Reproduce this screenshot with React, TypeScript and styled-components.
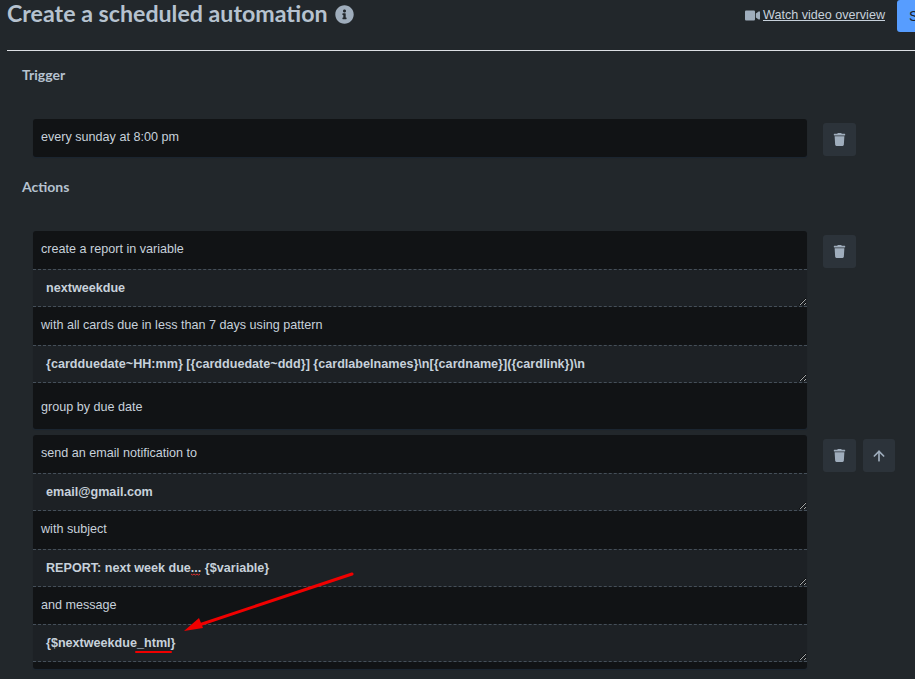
import React from "react";
import styled, { createGlobalStyle } from "styled-components";
import { FaInfoCircle, FaTrash, FaVideo } from "react-icons/fa";
import { ArrowUp } from "lucide-react";

const GlobalStyle = createGlobalStyle`
  html, body {
    margin: 0;
    padding: 0;
    height: 679px;
    overflow: hidden;
    background: #22272b;
  }
`;

const Page = styled.div`
  position: relative;
  width: 915px;
  height: 679px;
  overflow: hidden;
  padding-left: 7px;
  box-sizing: border-box;
  background: #22272b;
  color: #b6c2cf;
  font-family: "Liberation Sans", Arial, sans-serif;
  font-size: 14px;
`;

const Header = styled.header`
  display: flex;
  align-items: flex-start;
  width: 950px;
  height: 50px;
  border-bottom: 1px solid #dcdfe4;
`;

const Title = styled.h1`
  margin: -1px 0 0;
  font-family: Lato, sans-serif;
  font-size: 23.2px;
  font-weight: 700;
  line-height: 28px;
  color: #b6c2cf;
`;

const InfoIcon = styled(FaInfoCircle)`
  margin: 5px 0 0 7px;
  font-size: 19px;
  color: #9fadbc;
`;

const VideoLink = styled.a`
  display: flex;
  align-items: center;
  gap: 3px;
  margin: 7px 0 0 auto;
  color: #c7d1db;
  font-size: 12.6px;
  line-height: 16px;
  text-decoration: underline;
  svg {
    font-size: 15px;
    color: #9fadbc;
  }
`;

const SaveButton = styled.button`
  width: 60px;
  height: 32px;
  margin-left: 12px;
  padding: 0 12px;
  border: 0;
  border-radius: 3px;
  background: #579dff;
  color: #1d2125;
  font: 14px "Liberation Sans", Arial, sans-serif;
  text-align: left;
`;

const SectionTitle = styled.h2`
  margin: 0 0 0 15px;
  font-family: Lato, sans-serif;
  font-size: 14px;
  font-weight: 700;
  line-height: 20px;
  color: #b6c2cf;
`;

const Section = styled.section<{ $top: number; $gap: number }>`
  padding-top: ${(p) => p.$top}px;
  ${SectionTitle} {
    margin-bottom: ${(p) => p.$gap}px;
  }
`;

const RuleRow = styled.div`
  display: flex;
  align-items: flex-start;
  gap: 16px;
  margin: 0 0 6px 26px;
`;

const Card = styled.div`
  width: 774px;
  flex: none;
  border-radius: 3px;
  background: #111315;
  box-shadow: 0 1px 1px #091e4240;
  overflow: hidden;
`;

const Label = styled.div<{ $height: number }>`
  display: flex;
  align-items: center;
  box-sizing: border-box;
  height: ${(p) => p.$height}px;
  padding: 0 0 2px 8px;
  font-size: 12.6px;
  color: #c7d1db;
`;

const GroupLabel = styled(Label)`
  padding: 2px 0 0 8px;
`;

const Field = styled.textarea`
  display: block;
  box-sizing: border-box;
  width: 100%;
  height: 38px;
  margin: 0;
  padding: 9px 13px;
  border: 0;
  border-top: 1px dashed #454f59;
  border-bottom: 1px dashed #454f59;
  border-radius: 0;
  outline: 0;
  background: #1d2125;
  color: #c7d1db;
  font: bold 12.6px/18px "Liberation Sans", Arial, sans-serif;
  vertical-align: top;
`;

const Actions = styled.div`
  display: flex;
  gap: 7px;
  margin-top: 4px;
`;

const IconButton = styled.button<{ $width?: number }>`
  display: flex;
  align-items: center;
  justify-content: center;
  width: ${(p) => p.$width ?? 33}px;
  height: 33px;
  padding: 0;
  border: 0;
  border-radius: 3px;
  background: #2c333a;
  color: #9fadbc;
  font-size: 13px;
`;

const Annotation = styled.svg`
  position: absolute;
  inset: 0;
  pointer-events: none;
`;

const valueField = (value: string) => (
  <Field readOnly spellCheck={false} rows={1} defaultValue={value} />
);

export default function App() {
  return (
    <Page>
      <GlobalStyle />
      <Header>
        <Title>Create a scheduled automation</Title>
        <InfoIcon />
        <VideoLink href="#">
          <FaVideo />
          Watch video overview
        </VideoLink>
        <SaveButton>Save</SaveButton>
      </Header>

      <Section $top={14} $gap={34}>
        <SectionTitle>Trigger</SectionTitle>
        <RuleRow>
          <Card>
            <Label $height={38}>every sunday at 8:00 pm</Label>
          </Card>
          <Actions>
            <IconButton aria-label="Delete">
              <FaTrash />
            </IconButton>
          </Actions>
        </RuleRow>
      </Section>

      <Section $top={14} $gap={34}>
        <SectionTitle>Actions</SectionTitle>
        <RuleRow>
          <Card>
            <Label $height={38}>create a report in variable</Label>
            {valueField("nextweekdue")}
            <Label $height={38}>with all cards due in less than 7 days using pattern</Label>
            {valueField("{cardduedate~HH:mm} [{cardduedate~ddd}] {cardlabelnames}\\n[{cardname}]({cardlink})\\n")}
            <GroupLabel $height={46}>group by due date</GroupLabel>
          </Card>
          <Actions>
            <IconButton aria-label="Delete">
              <FaTrash />
            </IconButton>
          </Actions>
        </RuleRow>
        <RuleRow>
          <Card>
            <Label $height={38}>send an email notification to</Label>
            {valueField("email@gmail.com")}
            <Label $height={38}>with subject</Label>
            {valueField("REPORT: next week due... {$variable}")}
            <Label $height={37}>and message</Label>
            {valueField("{$nextweekdue_html}")}
            <Label $height={7} />
          </Card>
          <Actions>
            <IconButton aria-label="Delete">
              <FaTrash />
            </IconButton>
            <IconButton aria-label="Move up" $width={32}>
              <ArrowUp size={16} strokeWidth={2.5} />
            </IconButton>
          </Actions>
        </RuleRow>
      </Section>

      <Annotation width="915" height="679" viewBox="0 0 915 679">
        <path d="M191 574l1.500 1 1.500-1 1.500 1 1.500-1 1.500 1 1.500-1" fill="none" stroke="#e03030" strokeWidth="1" />
        <line x1="352" y1="574" x2="196" y2="626" stroke="#f00000" strokeWidth="3" strokeLinecap="round" />
        <polygon points="184,631 199,618 203,628" fill="#f00000" />
        <line x1="136" y1="652" x2="171" y2="652" stroke="#f00000" strokeWidth="2" strokeLinecap="round" />
      </Annotation>
    </Page>
  );
}
